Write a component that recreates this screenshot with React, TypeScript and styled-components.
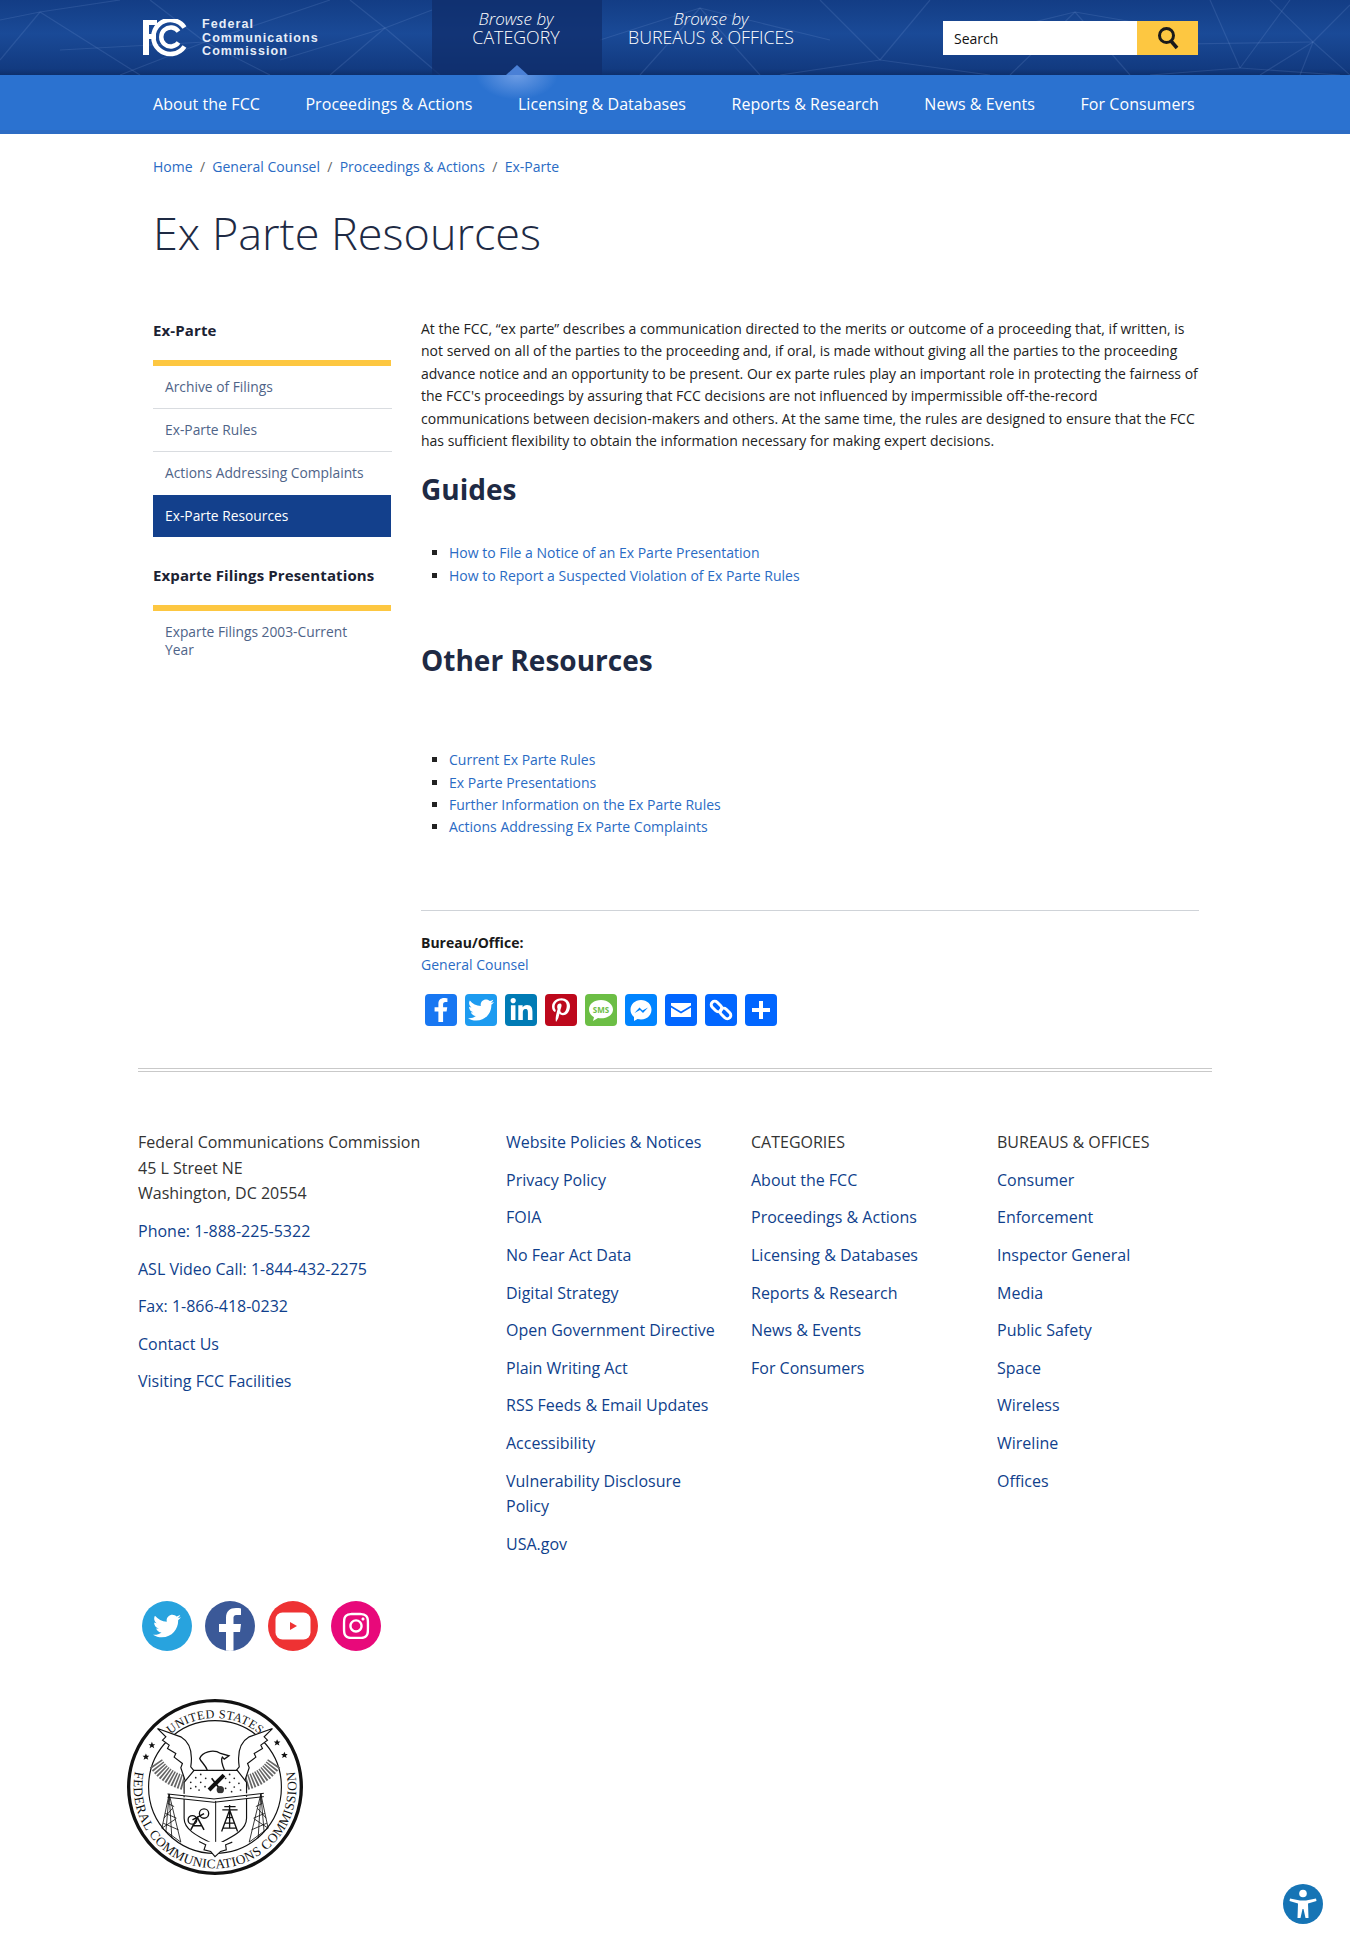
import React, { FC } from 'react';
import styled, { createGlobalStyle } from 'styled-components';
import { FaFacebookF, FaTwitter, FaLinkedinIn, FaPinterestP, FaInstagram } from 'react-icons/fa';

const GlobalStyle = createGlobalStyle`
  html, body {
    margin: 0;
    padding: 0;
    background: #fff;
    font-family: "Open Sans", "Liberation Sans", sans-serif;
    color: #222;
  }
  a { text-decoration: none; }
  * { box-sizing: border-box; }
`;

const Page = styled.div`
  position: relative;
  width: 1350px;
  height: 1957px;
  overflow: hidden;
`;

const TopBar = styled.header`
  position: relative;
  height: 75px;
  padding-left: 143px;
  display: flex;
  background: linear-gradient(#133d85 0%, #1a4a97 45%, #123a80 92%, #0d2f6b 100%);
`;

const LineArt = styled.svg`
  position: absolute;
  inset: 0;
  width: 100%;
  height: 100%;
`;

const Logo = styled.div`
  position: relative;
  width: 289px;
  display: flex;
  align-items: center;
  gap: 13px;
`;

const LogoText = styled.div`
  font-family: "Liberation Sans", Arial, sans-serif;
  font-size: 12.5px;
  line-height: 13.4px;
  font-weight: 700;
  letter-spacing: 1.1px;
  color: #e6edf8;
  padding-top: 2px;
`;

const Tab = styled.a<{ $active?: boolean }>`
  position: relative;
  height: 75px;
  width: ${(p) => (p.$active ? '170px' : '220px')};
  padding: 9px 2px 0 0;
  text-align: center;
  color: #fff;
  background: ${(p) => (p.$active ? 'rgba(15, 45, 105, 0.72)' : 'transparent')};
`;

const TabSmall = styled.div`
  font-size: 17px;
  line-height: 19px;
  font-style: italic;
  font-weight: 300;
`;

const TabBig = styled.div`
  font-size: 17.8px;
  line-height: 18px;
  font-weight: 300;
`;

const TabArrow = styled.span`
  position: absolute;
  left: 50%;
  bottom: 0;
  margin-left: -11px;
  width: 0;
  height: 0;
  border-left: 11px solid transparent;
  border-right: 11px solid transparent;
  border-bottom: 10px solid #4a80d6;
`;

const Search = styled.form`
  position: absolute;
  left: 943px;
  top: 21px;
  display: flex;
  width: 255px;
  height: 34px;
`;

const SearchField = styled.div`
  flex: 1;
  background: #fff;
  color: #111;
  font-size: 14px;
  line-height: 35px;
  padding-left: 11px;
`;

const SearchButton = styled.div`
  width: 61px;
  background: #fdc741;
  display: flex;
  align-items: center;
  justify-content: center;
`;

const NavBar = styled.nav`
  position: relative;
  height: 59px;
  padding: 2px 0 0 153px;
  display: flex;
  gap: 45.5px;
  align-items: center;
  background: #2b72d0;
  border-bottom: 4px solid #2d6cc4;
  color: #fff;
  font-size: 16px;
  letter-spacing: 0.05px;
`;

const NavGlow = styled.span`
  position: absolute;
  left: 477px;
  top: 0;
  width: 80px;
  height: 24px;
  background: radial-gradient(ellipse at 50% 0%, rgba(130, 170, 235, 0.75), rgba(130, 170, 235, 0) 72%);
`;

const NavLink = styled.a`
  position: relative;
  color: #fff;
  white-space: nowrap;
`;

const Content = styled.main`
  padding: 22px 0 0 153px;
  width: 1199px;
`;

const Crumbs = styled.div`
  display: flex;
  gap: 7.3px;
  font-size: 14px;
  line-height: 22px;
  color: #666;
`;

const TextLink = styled.a`
  color: #2a6bc4;
`;

const Title = styled.h1`
  margin: 27px 0 57px;
  font-size: 45px;
  line-height: 56px;
  font-weight: 300;
  color: #1e2a44;
`;

const Columns = styled.div`
  display: grid;
  grid-template-columns: 238px 778px;
  column-gap: 30px;
`;

const Sidebar = styled.aside`
  padding-top: 1px;
`;

const SideHeading = styled.h3`
  margin: 0 0 19px;
  font-size: 15px;
  line-height: 22px;
  font-weight: 700;
  letter-spacing: 0.12px;
  color: #1b2233;
`;

const SideList = styled.div`
  border-top: 6px solid #fdc741;
  margin-bottom: 27px;
`;

const SideItem = styled.a<{ $active?: boolean }>`
  display: block;
  padding: 12px 25px 11px 12px;
  min-height: ${(p) => (p.$active ? '42px' : '43px')};
  font-size: 13.8px;
  line-height: 18px;
  color: ${(p) => (p.$active ? '#fff' : '#4f6488')};
  background: ${(p) => (p.$active ? '#13408c' : 'transparent')};
  border-bottom: ${(p) => (p.$active ? 'none' : '1px solid #d9dce0')};
  width: ${(p) => (p.$active ? '238px' : '239px')};
  &:nth-child(3), &:only-child { border-bottom: none; }
`;

const Body = styled.p`
  margin: 0;
  font-size: 14px;
  line-height: 22.4px;
  color: #222;
`;

const SectionHeading = styled.h2<{ $top: number }>`
  margin: ${(p) => p.$top}px 0 0;
  font-size: 28px;
  line-height: 38px;
  font-weight: 700;
  color: #1e2a44;
`;

const Bullets = styled.ul<{ $top: number }>`
  margin: ${(p) => p.$top}px 0 0;
  padding-left: 28px;
  list-style: square;
  font-size: 14px;
  line-height: 22.4px;
`;

const Rule = styled.hr`
  margin: 71px 0 21px;
  border: 0;
  border-top: 1px solid #cfd3d8;
`;

const BureauLabel = styled.div`
  font-size: 14px;
  line-height: 22px;
  font-weight: 700;
  color: #1a1a1a;
`;

const ShareRow = styled.div`
  display: flex;
  gap: 8px;
  margin: 18px 0 0 4px;
`;

const ShareIcon = styled.a<{ $bg: string }>`
  width: 32px;
  height: 32px;
  border-radius: 4px;
  background: ${(p) => p.$bg};
  color: #fff;
  display: flex;
  align-items: center;
  justify-content: center;
`;

const Footer = styled.footer`
  margin: 42px 0 0 138px;
  width: 1074px;
  border-top: 4px double #c9c9c9;
  padding-top: 58px;
`;

const FooterGrid = styled.div`
  display: grid;
  grid-template-columns: 368px 245px 246px 1fr;
  font-size: 16px;
  line-height: 25.6px;
`;

const FooterColumn = styled.div`
  width: 215px;
  &:first-child { width: 340px; }
`;

const FooterLine = styled.div`
  margin-bottom: 12px;
  color: #333;
`;

const FooterLink = styled.a`
  display: block;
  margin-bottom: 12px;
  color: #103f8c;
`;

const SocialRow = styled.div`
  display: flex;
  gap: 13px;
  margin: 31.5px 0 0 4px;
`;

const SocialCircle = styled.a<{ $bg: string }>`
  width: 50px;
  height: 50px;
  border-radius: 50%;
  background: ${(p) => p.$bg};
  color: #fff;
  display: flex;
  align-items: center;
  justify-content: center;
  overflow: hidden;
`;

const SealWrap = styled.div`
  margin: 47px 0 0 -12px;
  width: 178px;
  height: 178px;
`;

const AccessButton = styled.a`
  position: absolute;
  left: 1283px;
  top: 1884px;
  width: 40px;
  height: 40px;
`;

// hubs the faint header lines fan out from
const lineHubs = [
  { x: 40, y: 12, ends: [[0, 60], [140, 75], [120, 0], [0, 20]] },
  { x: 205, y: 42, ends: [[150, 0], [120, 75], [270, 75], [330, 0], [60, 50]] },
  { x: 385, y: 28, ends: [[330, 75], [440, 75], [350, 0], [432, 10], [280, 60]] },
  { x: 700, y: 8, ends: [[640, 75], [760, 75], [600, 40], [830, 40]] },
  { x: 880, y: 60, ends: [[820, 0], [930, 0], [780, 75], [990, 75]] },
  { x: 1075, y: 12, ends: [[1010, 75], [1130, 75], [960, 40], [1180, 30]] },
  { x: 1240, y: 68, ends: [[1210, 0], [1290, 0], [1150, 75], [1340, 75]] },
  { x: 1313, y: 42, ends: [[1270, 0], [1350, 5], [1260, 75], [1350, 75], [1120, 45], [1300, 75]] },
];

const FccMark: FC = () => (
  <svg width="46" height="38" viewBox="0 0 46 38" fill="none" stroke="#fff">
    <path d="M0 1H14V6H6V15H13V20H6V36H0Z" fill="#fff" stroke="none" />
    <path d="M41.500 8.500A17 17 0 1 0 41.500 27.500" strokeWidth="4.600" />
    <path d="M35.500 12.500A9.500 9.500 0 1 0 35.500 23.500" strokeWidth="4.400" />
  </svg>
);

const SearchGlyph: FC = () => (
  <svg width="22" height="24" viewBox="0 0 22 24" fill="none" stroke="#1a1a1a">
    <circle cx="9.500" cy="9.500" r="7" strokeWidth="3" />
    <path d="M14 15l6 7" strokeWidth="3.600" />
  </svg>
);

const starPoints = [[78, 150], [60, 185], [455, 142], [477, 180]];
const shieldDots = [
  [195, 262], [210, 248], [225, 238], [225, 262], [210, 275], [240, 250], [195, 280], [238, 275], [220, 285],
  [312, 238], [326, 250], [340, 265], [312, 262], [326, 276], [345, 285], [300, 250], [300, 280], [318, 290],
];

const Seal: FC = () => (
  <svg width="178" height="178" viewBox="0 8 536 536" fill="none" stroke="#111">
    <defs>
      <path id="sealTop" d="M60 276A208 208 0 0 1 476 276" />
      <path id="sealBottom" d="M29.500 220A245 245 0 1 0 506.500 220" />
      <g id="sealWing">
        <path d="M90 205Q120 250 178 264" stroke="#666" strokeWidth="44" strokeDasharray="5 4" />
        <path d="M95 100L165 125C190 140 202 170 195 215L212 236L180 262L165 218L170 205L145 186L150 175L125 160L130 150L110 135L120 125Z" fill="#fff" strokeWidth="3.500" />
      </g>
      <g id="sealTower">
        <path d="M130 297L108 400L165 442ZM130 297L138 430M125 325L145 335M118 355L152 370M112 385L158 405M120 412L130 297M108 400L150 372M114 370L140 340" strokeWidth="2.500" />
      </g>
    </defs>
    <circle cx="268" cy="276" r="260" strokeWidth="10" />
    <circle cx="268" cy="276" r="200" strokeWidth="3.500" />
    <use href="#sealWing" />
    <use href="#sealWing" transform="translate(536 0) scale(-1 1)" />
    <text fontFamily="'Liberation Serif', serif" fontSize="37" fill="#111" stroke="none">
      <textPath href="#sealTop" startOffset="50%" textAnchor="middle" textLength="292" lengthAdjust="spacing">
        UNITED STATES
      </textPath>
    </text>
    <text fontFamily="'Liberation Serif', serif" fontSize="40" fill="#111" stroke="none">
      <textPath href="#sealBottom" startOffset="50%" textAnchor="middle" textLength="865" lengthAdjust="spacing">
        FEDERAL COMMUNICATIONS COMMISSION
      </textPath>
    </text>
    {starPoints.map((s, i) => (
      <path
        key={i}
        d="M0 -10L3 -3L10 -3L4.500 2L7 9L0 5L-7 9L-4.500 2L-10 -3L-3 -3Z"
        fill="#111"
        stroke="none"
        transform={`translate(${s[0]} ${s[1]})`}
      />
    ))}
    <path d="M245 226C240 210 225 200 222 190C228 172 262 160 285 175L310 182L296 192L290 186C284 195 290 210 297 226" fill="#fff" strokeWidth="4" />
    <path d="M205 226H335L363 262V370C363 410 310 430 270 452C230 430 175 410 175 370V262Z" fill="#fff" strokeWidth="3.500" />
    {shieldDots.map((d, i) => (
      <circle key={i} cx={d[0]} cy={d[1]} r="2.600" fill="#222" stroke="none" />
    ))}
    <path d="M250 285L295 240" strokeWidth="12" />
    <path d="M258 250L285 285" strokeWidth="5" />
    <circle cx="284" cy="284" r="11" fill="#333" stroke="none" />
    <path d="M125 297L265 312L415 295M125 307L265 322L415 305" fill="#fff" strokeWidth="3" />
    <path d="M270 318V450" strokeWidth="3" />
    <circle cx="200" cy="375" r="13" strokeWidth="4" />
    <circle cx="235" cy="356" r="14" strokeWidth="4" />
    <path d="M195 405L215 368L235 405M203 393H228M200 375L235 356" strokeWidth="4.500" />
    <path d="M288 410L312 345L336 410M298 385H326M293 400H331M302 368H322M290 345H336M296 335H330M312 330V400" strokeWidth="4" />
    <use href="#sealTower" />
    <use href="#sealTower" transform="translate(536 0) scale(-1 1)" />
    <path d="M220 440L240 450L235 465L255 470L268 486L285 470L302 465L300 450L320 442" fill="#fff" strokeWidth="3.500" />
  </svg>
);

const filingsLeft = [
  { name: 'Archive of Filings' },
  { name: 'Ex-Parte Rules' },
  { name: 'Actions Addressing Complaints' },
  { name: 'Ex-Parte Resources', active: true },
];

const policyLinks = [
  'Website Policies & Notices', 'Privacy Policy', 'FOIA', 'No Fear Act Data', 'Digital Strategy',
  'Open Government Directive', 'Plain Writing Act', 'RSS Feeds & Email Updates', 'Accessibility',
  'Vulnerability Disclosure Policy', 'USA.gov',
];
const categoryLinks = ['About the FCC', 'Proceedings & Actions', 'Licensing & Databases', 'Reports & Research', 'News & Events', 'For Consumers'];
const bureauLinks = ['Consumer', 'Enforcement', 'Inspector General', 'Media', 'Public Safety', 'Space', 'Wireless', 'Wireline', 'Offices'];

const App: FC = () => {
  return (
    <Page>
      <GlobalStyle />
      <TopBar>
        <LineArt viewBox="0 0 1350 75" preserveAspectRatio="none">
          {lineHubs.map((h) =>
            h.ends.map((e, i) => (
              <line key={`${h.x}-${i}`} x1={h.x} y1={h.y} x2={e[0]} y2={e[1]} stroke="#8fb0e6" strokeOpacity="0.16" strokeWidth="1.2" />
            ))
          )}
        </LineArt>
        <Logo>
          <FccMark />
          <LogoText>
            Federal
            <br />
            Communications
            <br />
            Commission
          </LogoText>
        </Logo>
        <Tab $active>
          <TabSmall>Browse by</TabSmall>
          <TabBig>CATEGORY</TabBig>
          <TabArrow />
        </Tab>
        <Tab>
          <TabSmall>Browse by</TabSmall>
          <TabBig>BUREAUS &amp; OFFICES</TabBig>
        </Tab>
        <Search>
          <SearchField>Search</SearchField>
          <SearchButton>
            <SearchGlyph />
          </SearchButton>
        </Search>
      </TopBar>
      <NavBar>
        <NavGlow />
        {categoryLinks.map((c) => (
          <NavLink key={c}>{c}</NavLink>
        ))}
      </NavBar>

      <Content>
        <Crumbs>
          <TextLink>Home</TextLink>
          <span>/</span>
          <TextLink>General Counsel</TextLink>
          <span>/</span>
          <TextLink>Proceedings &amp; Actions</TextLink>
          <span>/</span>
          <TextLink>Ex-Parte</TextLink>
        </Crumbs>
        <Title>Ex Parte Resources</Title>
        <Columns>
          <Sidebar>
            <SideHeading>Ex-Parte</SideHeading>
            <SideList>
              {filingsLeft.map((f) => (
                <SideItem key={f.name} $active={f.active}>
                  {f.name}
                </SideItem>
              ))}
            </SideList>
            <SideHeading>Exparte Filings Presentations</SideHeading>
            <SideList>
              <SideItem>Exparte Filings 2003-Current Year</SideItem>
            </SideList>
          </Sidebar>
          <div>
            <Body>
              At the FCC, “ex parte” describes a communication directed to the merits or outcome of a proceeding that, if
              written, is not served on all of the parties to the proceeding and, if oral, is made without giving all the
              parties to the proceeding advance notice and an opportunity to be present. Our ex parte rules play an important
              role in protecting the fairness of the FCC's proceedings by assuring that FCC decisions are not influenced by
              impermissible off-the-record communications between decision-makers and others. At the same time, the rules are
              designed to ensure that the FCC has sufficient flexibility to obtain the information necessary for making expert
              decisions.
            </Body>
            <SectionHeading $top={18}>Guides</SectionHeading>
            <Bullets $top={34}>
              <li><TextLink>How to File a Notice of an Ex Parte Presentation</TextLink></li>
              <li><TextLink>How to Report a Suspected Violation of Ex Parte Rules</TextLink></li>
            </Bullets>
            <SectionHeading $top={54}>Other Resources</SectionHeading>
            <Bullets $top={70}>
              <li><TextLink>Current Ex Parte Rules</TextLink></li>
              <li><TextLink>Ex Parte Presentations</TextLink></li>
              <li><TextLink>Further Information on the Ex Parte Rules</TextLink></li>
              <li><TextLink>Actions Addressing Ex Parte Complaints</TextLink></li>
            </Bullets>
            <Rule />
            <BureauLabel>Bureau/Office:</BureauLabel>
            <Body>
              <TextLink>General Counsel</TextLink>
            </Body>
            <ShareRow>
              <ShareIcon $bg="#1877f2"><FaFacebookF size={24} /></ShareIcon>
              <ShareIcon $bg="#1d9bf0"><FaTwitter size={26} /></ShareIcon>
              <ShareIcon $bg="#007bb5"><FaLinkedinIn size={25} /></ShareIcon>
              <ShareIcon $bg="#bd081c"><FaPinterestP size={24} /></ShareIcon>
              <ShareIcon $bg="#6cbe45">
                <svg width="28" height="28" viewBox="0 0 28 28">
                  <path d="M14 4C7 4 2 8 2 13.500c0 3.300 2 6.100 5 7.800L6 25l5-3c1 .2 2 .3 3 .3 7 0 12-4 12-8.800S21 4 14 4Z" fill="#fff" />
                  <text x="14" y="16.500" textAnchor="middle" fontFamily="'Open Sans', sans-serif" fontSize="8" fontWeight="700" fill="#6cbe45">SMS</text>
                </svg>
              </ShareIcon>
              <ShareIcon $bg="#0084ff">
                <svg width="26" height="26" viewBox="0 0 26 26">
                  <path d="M13 3C7 3 2.500 7.300 2.500 12.800c0 3 1.300 5.500 3.500 7.200v4l3.600-2c1.100.3 2.200.5 3.400.5 6 0 10.500-4.300 10.500-9.700S19 3 13 3Z" fill="#fff" />
                  <path d="M6.500 16l5-5.500 3 3 5.500-3-5 5.500-3-3Z" fill="#0084ff" />
                </svg>
              </ShareIcon>
              <ShareIcon $bg="#0166ff">
                <svg width="24" height="24" viewBox="0 0 24 24">
                  <path d="M2 5h20v2.500l-10 6-10-6Z" fill="#fff" />
                  <path d="M2 9.500l10 6 10-6V19H2Z" fill="#fff" />
                </svg>
              </ShareIcon>
              <ShareIcon $bg="#0166ff">
                <svg width="26" height="26" viewBox="0 0 26 26" fill="none" stroke="#fff" strokeWidth="3">
                  <rect x="2.500" y="6" width="12" height="7" rx="3.500" transform="rotate(45 8.500 9.500)" />
                  <rect x="11.500" y="13" width="12" height="7" rx="3.500" transform="rotate(45 17.500 16.500)" />
                </svg>
              </ShareIcon>
              <ShareIcon $bg="#0166ff">
                <svg width="24" height="24" viewBox="0 0 24 24">
                  <path d="M10 3h4v7h7v4h-7v7h-4v-7H3v-4h7Z" fill="#fff" />
                </svg>
              </ShareIcon>
            </ShareRow>
          </div>
        </Columns>
      </Content>

      <Footer>
        <FooterGrid>
          <FooterColumn>
            <FooterLine>
              Federal Communications Commission
              <br />
              45 L Street NE
              <br />
              Washington, DC 20554
            </FooterLine>
            <FooterLink>Phone: 1-888-225-5322</FooterLink>
            <FooterLink>ASL Video Call: 1-844-432-2275</FooterLink>
            <FooterLink>Fax: 1-866-418-0232</FooterLink>
            <FooterLink>Contact Us</FooterLink>
            <FooterLink>Visiting FCC Facilities</FooterLink>
          </FooterColumn>
          <FooterColumn>
            {policyLinks.map((l) => (
              <FooterLink key={l}>{l}</FooterLink>
            ))}
          </FooterColumn>
          <FooterColumn>
            <FooterLine>CATEGORIES</FooterLine>
            {categoryLinks.map((l) => (
              <FooterLink key={l}>{l}</FooterLink>
            ))}
          </FooterColumn>
          <FooterColumn>
            <FooterLine>BUREAUS &amp; OFFICES</FooterLine>
            {bureauLinks.map((l) => (
              <FooterLink key={l}>{l}</FooterLink>
            ))}
          </FooterColumn>
        </FooterGrid>
        <SocialRow>
          <SocialCircle $bg="#28a3de"><FaTwitter size={28} /></SocialCircle>
          <SocialCircle $bg="#3b5998">
            <svg width="50" height="50" viewBox="0 0 50 50">
              <path d="M21 50V31H14V23H21V17C21 10 25 7 31 7C33 7 35 7.200 36 7.400V14H32C29 14 28.500 15.500 28.500 17.500V23H36L35 31H28.500V50Z" fill="#fff" />
            </svg>
          </SocialCircle>
          <SocialCircle $bg="#ee3233">
            <svg width="36" height="28" viewBox="0 0 36 28">
              <rect x="0.500" y="0.500" width="35" height="27" rx="7" fill="#fff" />
              <path d="M15 10l7 4-7 4Z" fill="#ee3233" />
            </svg>
          </SocialCircle>
          <SocialCircle $bg="#e8097a"><FaInstagram size={30} /></SocialCircle>
        </SocialRow>
        <SealWrap>
          <Seal />
        </SealWrap>
      </Footer>

      <AccessButton>
        <svg width="40" height="40" viewBox="0 0 40 40">
          <circle cx="20" cy="20" r="20" fill="#1674b5" />
          <circle cx="20" cy="9.500" r="3.800" fill="#fff" />
          <path d="M7 14.500L17 16.500H23L33 14.500L33.500 17L25 19.500L25.500 34H22.500L20.500 25H19.500L17.500 34H14.500L15 19.500L6.500 17Z" fill="#fff" />
        </svg>
      </AccessButton>
    </Page>
  );
};

export default App;
